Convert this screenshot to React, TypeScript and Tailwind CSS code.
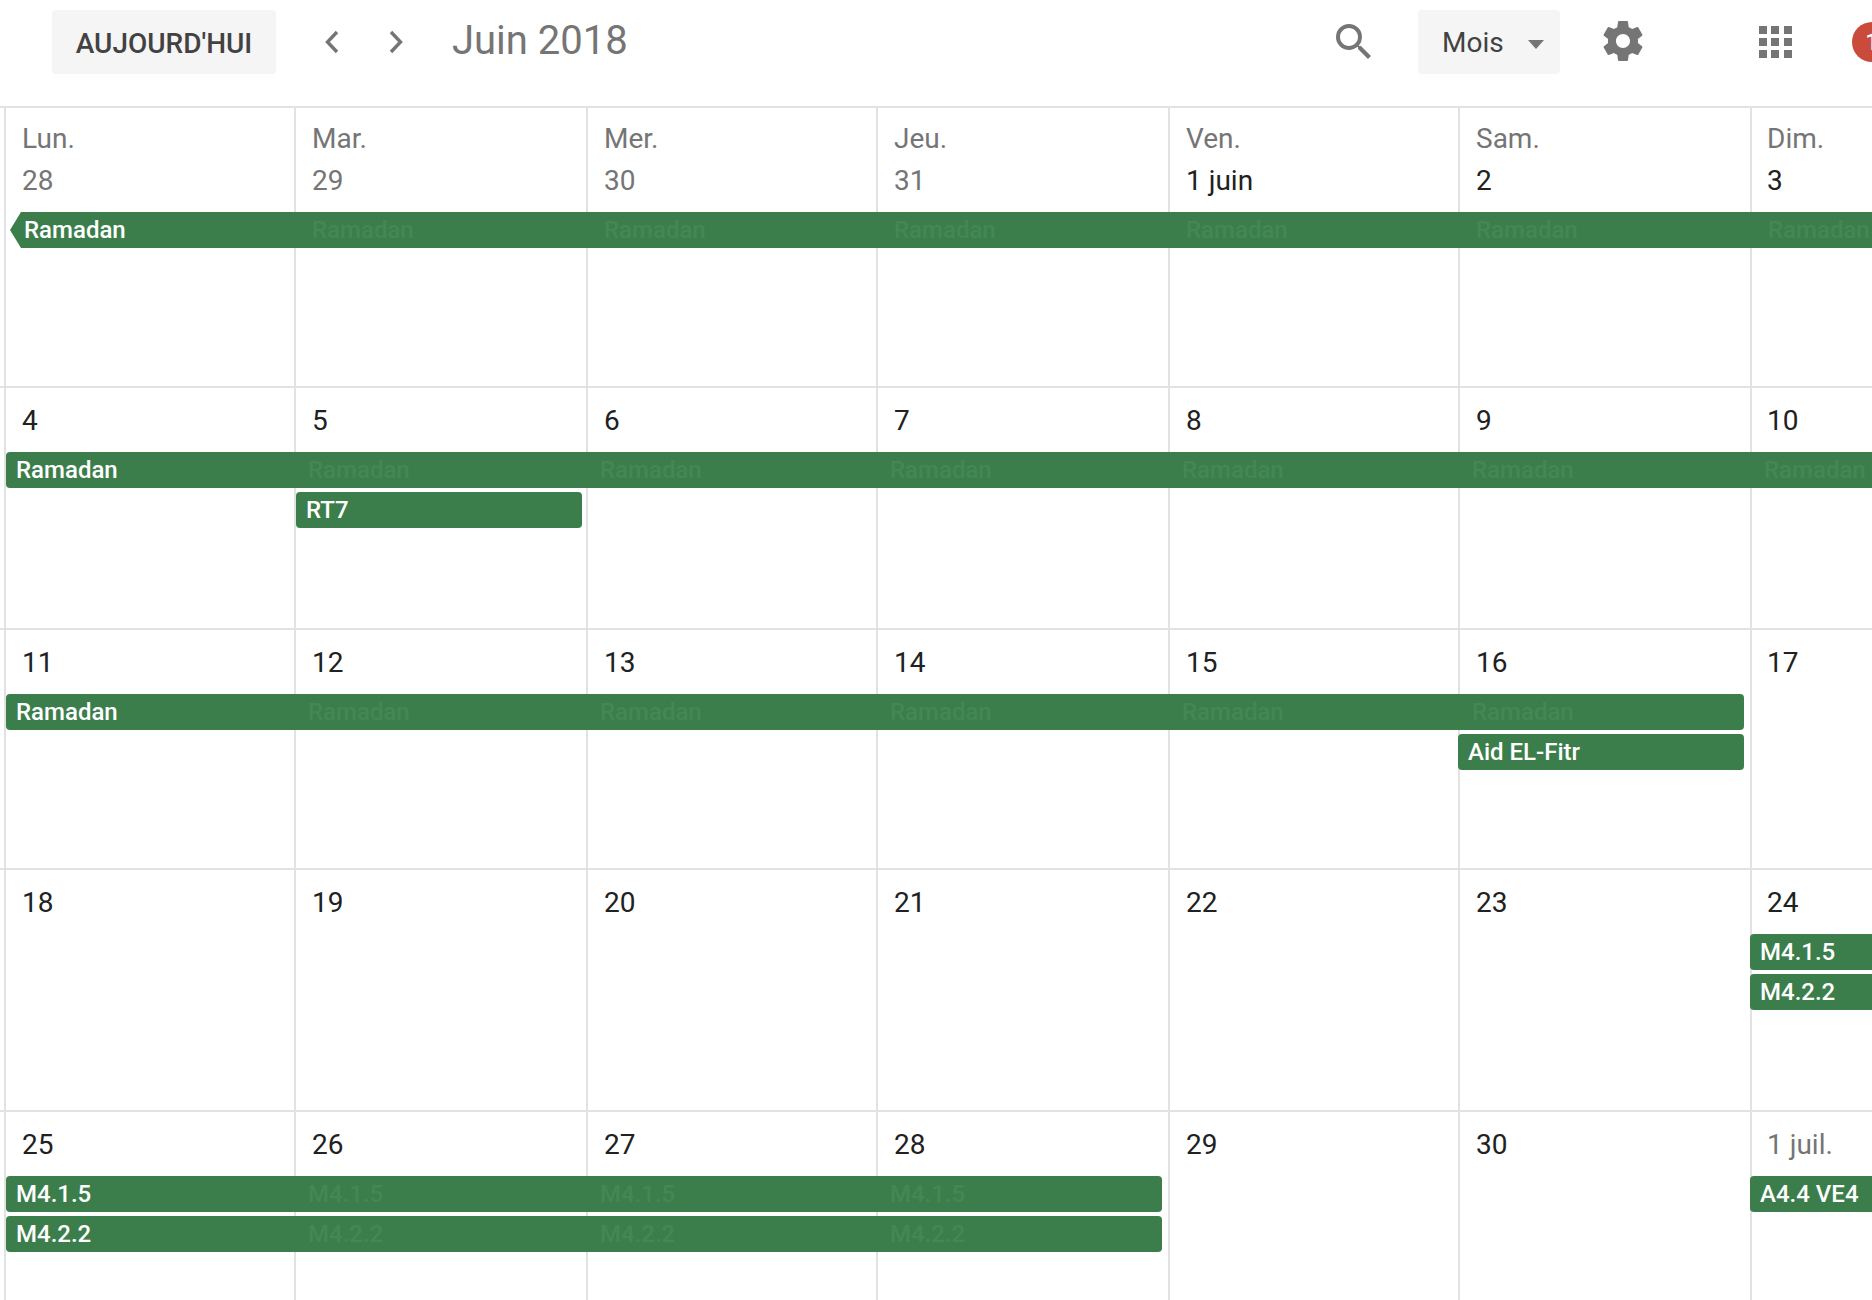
type Segment = { label: string; pad: string; cls: string };

interface CalEvent {
  cls: string;
  segments: Segment[];
}

interface Week {
  cls: string;
  rows: string;
  days: { label?: string; date: string; muted?: boolean }[];
  events: CalEvent[];
}

const colStart = [
  "col-start-1 pl-4",
  "col-start-2 pl-4",
  "col-start-3 pl-4",
  "col-start-4 pl-4",
  "col-start-5 pl-4",
  "col-start-6 pl-4",
  "col-start-7 pl-[15px]",
];

// faint copies of the title, one per day the bar crosses
const ghost = (label: string, count: number, cls = "pl-3.5"): Segment[] =>
  Array.from({ length: count }, () => ({ label, pad: cls, cls: "text-[#448755]" }));

const weeks: Week[] = [
  {
    cls: "h-[280px]",
    rows: "grid-rows-[104px_40px_40px_1fr]",
    days: [
      { label: "Lun.", date: "28", muted: true },
      { label: "Mar.", date: "29", muted: true },
      { label: "Mer.", date: "30", muted: true },
      { label: "Jeu.", date: "31", muted: true },
      { label: "Ven.", date: "1 juin" },
      { label: "Sam.", date: "2" },
      { label: "Dim.", date: "3" },
    ],
    events: [
      {
        cls: "row-start-2 col-start-1 col-span-7 ml-1.5 [clip-path:polygon(11px_0,100%_0,100%_100%,11px_100%,0_50%)]",
        segments: [
          { label: "Ramadan", pad: "pl-3.5", cls: "text-white" },
          ...ghost("Ramadan", 6, "pl-[18px]"),
        ],
      },
    ],
  },
  {
    cls: "h-[242px]",
    rows: "grid-rows-[64px_40px_40px_1fr]",
    days: ["4", "5", "6", "7", "8", "9", "10"].map((date) => ({ date })),
    events: [
      {
        cls: "row-start-2 col-start-1 col-span-7 ml-0.5 rounded-l",
        segments: [
          { label: "Ramadan", pad: "pl-2.5", cls: "text-white" },
          ...ghost("Ramadan", 6),
        ],
      },
      {
        cls: "row-start-3 col-start-2 col-span-1 ml-0.5 mr-1 rounded",
        segments: [{ label: "RT7", pad: "pl-2.5", cls: "text-white" }],
      },
    ],
  },
  {
    cls: "h-[240px]",
    rows: "grid-rows-[64px_40px_40px_1fr]",
    days: ["11", "12", "13", "14", "15", "16", "17"].map((date) => ({ date })),
    events: [
      {
        cls: "row-start-2 col-start-1 col-span-6 ml-0.5 mr-1.5 rounded",
        segments: [
          { label: "Ramadan", pad: "pl-2.5", cls: "text-white" },
          ...ghost("Ramadan", 5),
        ],
      },
      {
        cls: "row-start-3 col-start-6 col-span-1 mr-1.5 rounded",
        segments: [{ label: "Aid EL-Fitr", pad: "pl-2.5", cls: "text-white" }],
      },
    ],
  },
  {
    cls: "h-[242px]",
    rows: "grid-rows-[64px_40px_40px_1fr]",
    days: ["18", "19", "20", "21", "22", "23", "24"].map((date) => ({ date })),
    events: [
      {
        cls: "row-start-2 col-start-7 col-span-1 rounded-l",
        segments: [{ label: "M4.1.5", pad: "pl-2.5", cls: "text-white" }],
      },
      {
        cls: "row-start-3 col-start-7 col-span-1 rounded-l",
        segments: [{ label: "M4.2.2", pad: "pl-2.5", cls: "text-white" }],
      },
    ],
  },
  {
    cls: "h-[190px]",
    rows: "grid-rows-[64px_40px_40px_1fr]",
    days: [
      { date: "25" },
      { date: "26" },
      { date: "27" },
      { date: "28" },
      { date: "29" },
      { date: "30" },
      { date: "1 juil.", muted: true },
    ],
    events: [
      {
        cls: "row-start-2 col-start-1 col-span-4 ml-0.5 mr-1.5 rounded",
        segments: [
          { label: "M4.1.5", pad: "pl-2.5", cls: "text-white" },
          ...ghost("M4.1.5", 3),
        ],
      },
      {
        cls: "row-start-3 col-start-1 col-span-4 ml-0.5 mr-1.5 rounded",
        segments: [
          { label: "M4.2.2", pad: "pl-2.5", cls: "text-white" },
          ...ghost("M4.2.2", 3),
        ],
      },
      {
        cls: "row-start-2 col-start-7 col-span-1 rounded-l",
        segments: [{ label: "A4.4 VE4", pad: "pl-2.5", cls: "text-white" }],
      },
    ],
  },
];

function Header() {
  return (
    <header className="flex h-[106px] items-start overflow-hidden pt-2.5">
      <button className="ml-[52px] flex h-[64px] w-[224px] items-center justify-center rounded bg-[#f5f5f5] pt-1 text-[28px] font-medium text-[#424242]">
        AUJOURD'HUI
      </button>

      {/* Month navigation */}
      <svg className="ml-[42px] mt-[17px] h-[30px] w-[30px]" viewBox="0 0 30 30" fill="none">
        <path d="M19 5 9.5 15l9.5 10" stroke="#757575" strokeWidth="3.4" />
      </svg>
      <svg className="ml-8 mt-[17px] h-[30px] w-[30px]" viewBox="0 0 30 30" fill="none">
        <path d="M11 5l9.5 10L11 25" stroke="#757575" strokeWidth="3.4" />
      </svg>
      <h1 className="ml-[42px] mt-1 text-[40px] leading-[54px] text-[#757575]">Juin 2018</h1>

      <div className="ml-auto flex items-start">
        {/* Search */}
        <svg className="mt-2 h-[48px] w-[48px]" viewBox="0 0 24 24" fill="#757575">
          <path d="M15.5 14h-.79l-.28-.27A6.47 6.47 0 0 0 16 9.5 6.5 6.5 0 1 0 9.5 16c1.61 0 3.09-.59 4.23-1.57l.27.28v.79l5 4.99L20.49 19l-4.99-5zm-6 0C7.01 14 5 11.99 5 9.5S7.01 5 9.5 5 14 7.01 14 9.5 11.99 14 9.5 14z" />
        </svg>

        <button className="ml-10 flex h-[64px] w-[142px] items-center rounded bg-[#f5f5f5] pl-6 pt-0.5 text-[28px] text-[#424242]">
          Mois
          <span className="ml-[24px] mt-0.5 h-0 w-0 border-x-[8px] border-t-[9px] border-x-transparent border-t-[#757575]" />
        </button>

        {/* Settings */}
        <svg className="ml-[39px] mt-[7px] h-[48px] w-[48px]" viewBox="0 0 24 24" fill="#757575">
          <path d="M19.43 12.98c.04-.32.07-.64.07-.98s-.03-.66-.07-.98l2.11-1.65c.19-.15.24-.42.12-.64l-2-3.46c-.12-.22-.39-.3-.61-.22l-2.49 1c-.52-.4-1.08-.73-1.69-.98l-.38-2.65A.488.488 0 0 0 14 2h-4c-.25 0-.46.18-.49.42l-.38 2.65c-.61.25-1.17.59-1.69.98l-2.49-1c-.23-.09-.49 0-.61.22l-2 3.46c-.13.22-.07.49.12.64l2.11 1.65c-.04.32-.07.65-.07.98s.03.66.07.98l-2.11 1.65c-.19.15-.24.42-.12.64l2 3.46c.12.22.39.3.61.22l2.49-1c.52.4 1.08.73 1.69.98l.38 2.65c.03.24.24.42.49.42h4c.25 0 .46-.18.49-.42l.38-2.65c.61-.25 1.17-.59 1.69-.98l2.49 1c.23.09.49 0 .61-.22l2-3.46c.12-.22.07-.49-.12-.64l-2.11-1.65zM12 15.5c-1.93 0-3.5-1.57-3.5-3.5s1.57-3.5 3.5-3.5 3.5 1.57 3.5 3.5-1.57 3.5-3.5 3.5z" />
        </svg>

        {/* Apps */}
        <svg className="ml-28 mt-4 h-[32px] w-[33px]" viewBox="0 0 33 32" fill="#757575">
          <path d="M0 0h8v8H0zM12 0h8v8h-8zM25 0h8v8h-8zM0 12h8v8H0zM12 12h8v8h-8zM25 12h8v8h-8zM0 24h8v8H0zM12 24h8v8h-8zM25 24h8v8h-8z" />
        </svg>

        {/* Account */}
        <div className="ml-[60px] mr-[-20px] mt-3 flex h-10 w-10 items-center justify-center rounded-full bg-[#cb4b3b] text-[24px] font-medium text-white">
          1
        </div>
      </div>
    </header>
  );
}

export default function App() {
  return (
    <div className="h-[1300px] w-[1872px] overflow-hidden bg-white font-['Roboto',sans-serif]">
      <Header />

      {weeks.map((week, w) => (
        <div
          key={w}
          className={`grid grid-cols-[290px_292px_290px_292px_290px_292px_292px] border-t-2 border-[#e2e2e2] pl-1 ${week.cls} ${week.rows}`}
        >
          {week.days.map((day, i) => (
            <div
              key={i}
              className={`row-span-full border-l-2 border-[#e2e2e2] text-[28px] ${colStart[i]}`}
            >
              {day.label && <div className="pt-[10px] leading-[42px] text-[#757575]">{day.label}</div>}
              <div
                className={`leading-[42px] ${day.label ? "" : "pt-3"} ${day.muted ? "text-[#757575]" : "text-[#212121]"}`}
              >
                {day.date}
              </div>
            </div>
          ))}

          {week.events.map((ev, e) => (
            <div
              key={e}
              className={`z-10 grid h-9 grid-cols-subgrid items-center bg-[#3b7e4b] text-[24px] font-medium leading-9 ${ev.cls}`}
            >
              {ev.segments.map((seg, s) => (
                <span key={s} className={`truncate ${seg.pad} ${seg.cls}`}>
                  {seg.label}
                </span>
              ))}
            </div>
          ))}
        </div>
      ))}
    </div>
  );
}
